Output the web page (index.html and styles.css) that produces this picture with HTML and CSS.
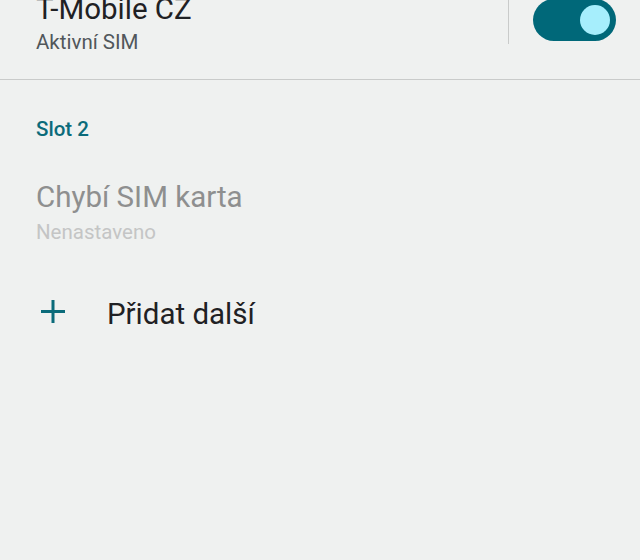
FILE: index.html
```html
<!DOCTYPE html>
<html lang="cs">
<head>
    <meta charset="UTF-8">
    <meta name="viewport" content="width=device-width, initial-scale=1.0">
    <title>SIM karty</title>
    <link rel="stylesheet" href="styles.css">
</head>
<body>
    <div class="screen">
        <!-- Slot 1 (odscrollovano nahoru) -->
        <div class="sim-row">
            <div class="sim-text">
                <div class="sim-title">T-Mobile CZ</div>
                <div class="sim-summary">Aktivní SIM</div>
            </div>
            <div class="vdivider"></div>
            <div class="toggle on">
                <div class="knob"></div>
            </div>
        </div>

        <div class="section">
            <div class="section-title">Slot 2</div>
            <div class="sim-item disabled">
                <div class="item-title">Chybí SIM karta</div>
                <div class="item-summary">Nenastaveno</div>
            </div>
            <div class="add-row">
                <svg class="plus" width="24" height="24" viewBox="0 0 24 24">
                    <path d="M12 0v23M0 11.5h24" stroke="#0b6b7a" stroke-width="3" fill="none"/>
                </svg>
                <div class="add-label">Přidat další</div>
            </div>
        </div>
    </div>
</body>
</html>
```

FILE: styles.css
```css
body {
    margin: 0;
    padding: 0;
    background-color: #eff1f0;
    font-family: Roboto, "Noto Sans", sans-serif;
}
.screen {
    width: 640px;
    height: 560px;
    overflow: hidden;
}
.sim-row {
    display: flex;
    align-items: flex-start;
    margin-top: -9px;
    padding: 0 24px 24px 36px;
    border-bottom: 1px solid #c9cbca;
}
.sim-text {
    flex: 1;
}
.sim-title {
    font-size: 29.5px;
    line-height: 36px;
    color: #1f2124;
}
.sim-summary {
    margin-top: 2px;
    font-size: 20.5px;
    line-height: 26px;
    color: #51575b;
}
.vdivider {
    width: 1px;
    height: 53px;
    background-color: #c9cbca;
    margin-right: 24px;
}
.toggle {
    width: 83px;
    height: 42px;
    margin-top: 8px;
    border-radius: 21px;
    background-color: #006879;
    display: flex;
    align-items: center;
    justify-content: flex-end;
    padding-right: 6px;
    box-sizing: border-box;
}
.knob {
    width: 30px;
    height: 30px;
    border-radius: 50%;
    background-color: #a6eefc;
}
.section {
    padding: 36px 24px 0 36px;
}
.section-title {
    font-size: 20.5px;
    line-height: 26px;
    font-weight: 500;
    color: #0b6b7a;
}
.sim-item {
    margin-top: 37px;
}
.item-title {
    font-size: 29.5px;
    line-height: 36px;
    color: #8e8f8f;
}
.item-summary {
    margin-top: 4px;
    font-size: 20.5px;
    line-height: 26px;
    color: #c4c5c5;
}
.add-row {
    display: flex;
    align-items: flex-start;
    margin-top: 51px;
}
.plus {
    margin: 4px 0 0 5px;
}
.add-label {
    margin-left: 42px;
    font-size: 29.5px;
    line-height: 36px;
    color: #1f2124;
}
```
